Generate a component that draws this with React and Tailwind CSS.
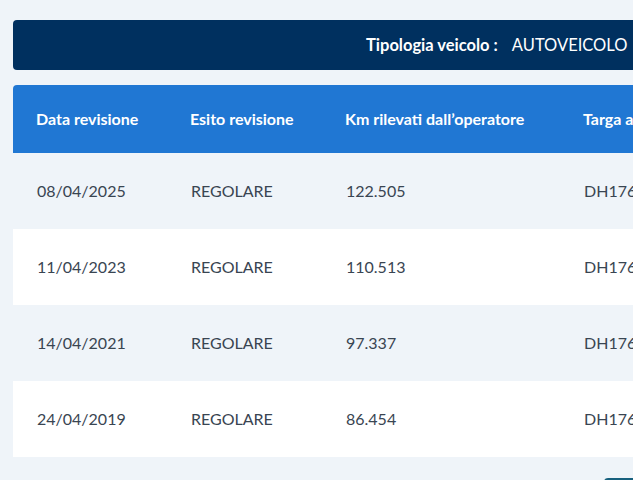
export default function App() {
  const rows = [
    ["08/04/2025", "REGOLARE", "122.505", "DH176JX"],
    ["11/04/2023", "REGOLARE", "110.513", "DH176JX"],
    ["14/04/2021", "REGOLARE", "97.337", "DH176JX"],
    ["24/04/2019", "REGOLARE", "86.454", "DH176JX"],
  ];
  const cols = "grid grid-cols-[154px_155px_238px_400px]";
  return (
    <div
      className="w-[633px] h-[480px] overflow-hidden bg-[#eff4f9]"
      style={{ fontFamily: "Lato, 'Open Sans', sans-serif" }}
    >
      <div className="ml-[13px] w-[1000px] pt-[20px]">
        <div className="h-[50px] rounded-[4px] bg-[#00305f] flex items-center pl-[353px] text-white text-[16.5px] whitespace-nowrap">
          <span className="font-bold">Tipologia veicolo :</span>
          <span className="ml-[14px]">AUTOVEICOLO</span>
        </div>
        <div className={`${cols} mt-[15px] h-[68px] items-center rounded-t-[4px] bg-[#2077d3] text-white font-bold text-[16px] pl-[23px] whitespace-nowrap`}>
          <div>Data revisione</div>
          <div>Esito revisione</div>
          <div>Km rilevati dall’operatore</div>
          <div>Targa al momento della revisione</div>
        </div>
        {rows.map((r, i) => (
          <div
            key={i}
            className={`${cols} h-[76px] items-center pl-[24px] text-[16px] text-[#394552] ${i % 2 === 1 ? "bg-white" : ""}`}
          >
            {r.map((c, j) => (
              <div key={j}>{c}</div>
            ))}
          </div>
        ))}
        <div className="flex">
          <div className="ml-[591px] mt-[21px] w-[60px] h-[30px] rounded-[4px] bg-[#17607e]" />
        </div>
      </div>
    </div>
  );
}
